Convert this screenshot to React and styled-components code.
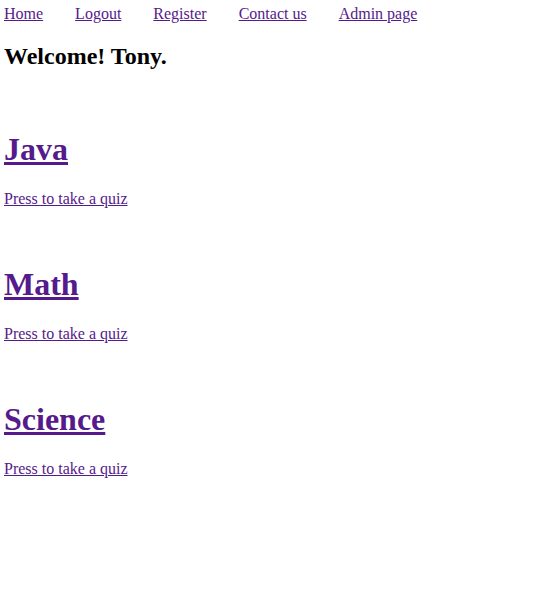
import React from "react";
import styled, { createGlobalStyle } from "styled-components";

const GlobalStyle = createGlobalStyle`
  body {
    margin: 0;
    background: #ffffff;
    font-family: "Liberation Serif", "Times New Roman", serif;
    color: #000000;
  }
`;

const Page = styled.div`
  padding: 5px 4px 4px;
`;

const Nav = styled.nav`
  display: flex;
  gap: 32px;
  font-size: 16px;
`;

const NavLink = styled.a`
  color: #551a8b;
  text-decoration: underline;
`;

const Welcome = styled.h2`
  font-size: 24px;
  font-weight: bold;
  margin: 20px 0 0;
`;

const Subject = styled.section`
  margin-top: ${(p) => p.$gap}px;
`;

const SubjectTitle = styled.h1`
  font-size: 32px;
  font-weight: bold;
  margin: 0;

  a {
    color: #551a8b;
    text-decoration: underline;
  }
`;

const QuizLink = styled.a`
  display: block;
  width: max-content;
  margin-top: 22px;
  font-size: 16px;
  color: #551a8b;
  text-decoration: underline;
`;

const links = ["Home", "Logout", "Register", "Contact us", "Admin page"];
const subjects = ["Java", "Math", "Science"];

export default function App() {
  return (
    <>
      <GlobalStyle />
      <Page>
        <Nav>
          {links.map((l) => (
            <NavLink key={l} href="#">
              {l}
            </NavLink>
          ))}
        </Nav>
        <Welcome>Welcome! Tony.</Welcome>
        {subjects.map((s, i) => (
          <Subject key={s} $gap={i === 0 ? 61 : 58}>
            <SubjectTitle>
              <a href="#">{s}</a>
            </SubjectTitle>
            <QuizLink href="#">Press to take a quiz</QuizLink>
          </Subject>
        ))}
      </Page>
    </>
  );
}
